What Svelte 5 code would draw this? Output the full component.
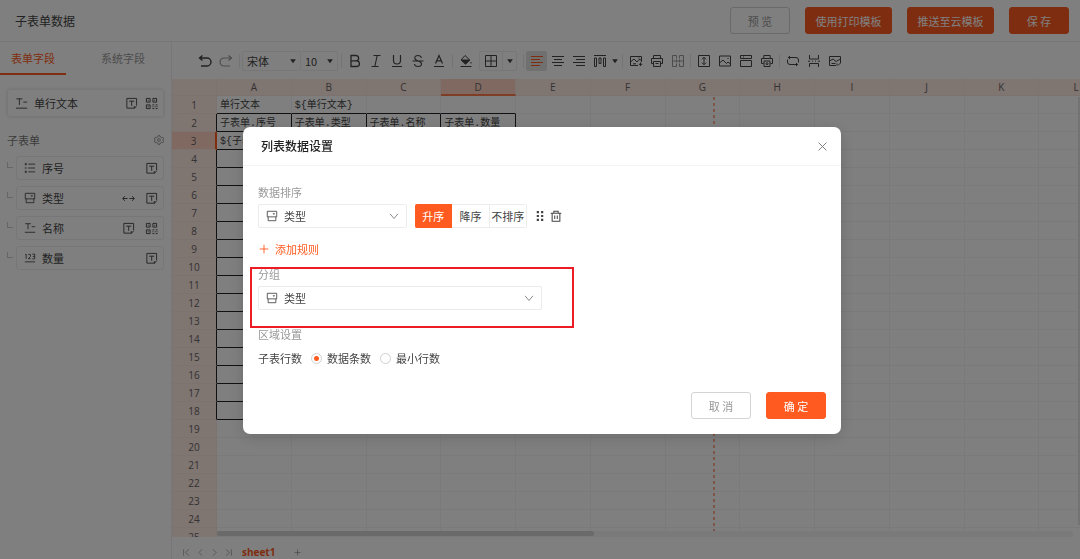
<script>
  // Inner markup of each line icon, drawn on a 14 x 14 grid.
  const icons = {
    undo: '<path d="M4.500 1.500 1.500 4l3 2.500M1.800 4H9a3.800 3.800 0 0 1 0 8H3" stroke-width="1.4"/>',
    redo: '<path d="M9.500 1.500 12.500 4l-3 2.500M12.200 4H5a3.800 3.800 0 0 0 0 8h6" stroke-width="1.2"/>',
    bold: '<path d="M3 1.500h5a2.600 2.600 0 0 1 0 5.300H3zM3 6.800h5.600a2.800 2.800 0 0 1 0 5.700H3z" stroke-width="1.3"/>',
    italic: '<path d="M4.500 1.500h7M2.500 12.500h7M8.200 1.500 5.800 12.500" stroke-width="1.1"/>',
    underline: '<path d="M3.500 1v5.500a3.500 3.500 0 0 0 7 0V1M2 12.500h10" stroke-width="1.2"/>',
    strike: '<path d="M10.500 3.800C10 2.300 8.800 1.500 7 1.500 5 1.500 3.800 2.500 3.800 4 3.800 5.500 5 6.300 7 7c2.300.6 3.500 1.500 3.500 3 0 1.600-1.400 2.500-3.500 2.500S3.600 11.500 3.400 10M1.500 7h11" stroke-width="1.1"/>',
    color: '<path d="M3.500 9.500 7 1.500l3.500 8M4.800 6.800h4.400M2 12.500h10" stroke-width="1.2"/>',
    fill: '<path d="M6 1.500 10.800 6 6.500 10 2 6z"/><path d="M2.300 6h8.200L6.500 10z" fill="currentColor"/><path d="M12 8v1.500M1.500 12.500h11"/>',
    borders: '<path d="M1.500 1.500h11v11h-11zM7 1.500v11M1.500 7h11"/>',
    left: '<path d="M1 2.500h12M1 5.500h9M1 8.500h12M1 11.500h9"/>',
    center: '<path d="M1 2.500h12M3 5.500h8M1 8.500h12M3 11.500h8"/>',
    right: '<path d="M1 2.500h12M4 5.500h9M1 8.500h12M4 11.500h9"/>',
    valign: '<path d="M1 1.500h12M1.500 4h2v8.500h-2zM6 4h2v5.500H6zM10.500 4h2v8.500h-2z"/>',
    imgcell: '<path d="M9 11.500H1.500v-9h11V8M1.500 8 5 5l3 3 2-2.500 2.500.5M11.500 8.500v3.500M9.800 10.300h3.500M4 9.800h3"/><path d="M9.500 4h1"/>',
    print: '<path d="M3.500 4.500v-3h7v3M3.500 9.500h-2v-5h11v5h-2M3.500 7.500h7v5h-7zM5.500 9.500h3"/>',
    merge: '<path d="M5.500 4.500v-3h-4v11h4v-3M8.500 4.500v-3h4v11h-4v-3M1.500 7h11M5.500 5.500v3M8.500 5.500v3"/>',
    height: '<path d="M1.500 1.500h11v11h-11zM7 3.500v7M5 5.300l2-2 2 2M5 8.700l2 2 2-2"/>',
    image: '<path d="M1.500 2h11v10h-11zM1.500 9 5 6l3.500 3.500L10 8l2.500 2M9.500 4.500h1"/>',
    window: '<path d="M1.500 1.500h11v3h-11zM1.500 6.500h11v6h-11zM4 3h1"/>',
    printset: '<path d="M3.800 4.500v-3h6.400v3M3.500 9.500h-2v-5h11v5h-2M4 7h6v5.500H4z"/><circle cx="7" cy="9.700" r="1"/>',
    loop: '<path d="M12.500 8.500V6a2.500 2.500 0 0 0-2.500-2.500H2.500M4 2 2.300 3.500 4 5M1.500 5.500V8A2.500 2.500 0 0 0 4 10.500h7.500M10 9l1.700 1.500L10 12"/>',
    split: '<path d="M2.500 1v4h9V1M2.500 13V9.500h9V13M1 7.200h2M5 7.200h1M8 7.200h1M11 7.200h2"/>',
    background: '<path d="M8 11.500H1.500v-9h11V9L10 11.500M1.500 7 5 5l3 2.500L12.500 5M3.500 9.500h4M9 9.500v2"/>',
    text: '<path d="M1.500 2h6.500M4.700 2v6.500M9 5.500h4M1 12h12"/>',
    tag: '<path d="M9.500 12H2V1.500h10.500v7.500M4.500 4.500H10M7.200 4.500v5M12.500 9.500 10 12.500V9.800"/>',
    qr: '<path d="M1.500 1.500h4v4h-4zM8.500 1.500h4v4h-4zM1.500 8.500h4v4h-4zM3 3.500h1M10 3.500h1M3 10.500h1M8 8.500h2M11.500 8.500h2M8 10.500h1M10.500 10.500h1M12.500 10.500h1M8 12.500h2M11.500 12.500h2"/>',
    list: '<path d="M5 2.500h8M5 7h8M5 11.500h8M.8 2.500h2.400M.8 7h2.400M.8 11.500h2.400M2.200 1v3M2.200 10v3"/>',
    type: '<path d="M1.500 1.500h11v6.500h-11zM2.500 8v4.500h9V8"/><path d="M8 4h2.400l-1.200 1.500z" fill="currentColor" stroke-width=".3"/>',
    number: '<path d="M1.500 3.500l1-1V8M5 2.800h2.500v2.500L5 7.800h2.700M9.700 2.500h2.800V8H9.700M10.200 5.200h2.200M1 11.500h12"/>',
    arrows: '<path d="M6 7H1M3 4.500.8 7 3 9.500M8 7h5M11 4.500 13.200 7 11 9.500"/>',
    gear: '<path d="M5.600 1h2.800l.5 1.800 1.600.9 1.800-.5L13.500 5.500 12.300 7l1.200 1.500-1.200 2.300-1.800-.5-1.600.9L8.400 13H5.600l-.5-1.800-1.600-.9-1.800.5L.5 8.500 1.700 7 .5 5.500l1.200-2.300 1.800.5 1.600-.9z"/><circle cx="7" cy="7" r="2"/>',
    caret: '<path d="M3 4.500h8L7 10z" fill="currentColor" stroke="none"/>',
    chevron: '<path d="M1.500 4 7 10.500 12.500 4" stroke-width="1.2"/>',
    close: '<path d="M2 2l10 10M12 2 2 12" stroke-width="1.2"/>',
    plus: '<path d="M7 1v12M1 7h12" stroke-width="1.3"/>',
    drag: '<path d="M3.200 1.200h2.600v2.600H3.200zM8.200 1.200h2.600v2.600H8.200zM3.200 5.700h2.600v2.600H3.200zM8.200 5.700h2.600v2.600H8.200zM3.200 10.200h2.600v2.600H3.200zM8.200 10.200h2.600v2.600H8.200z" fill="currentColor" stroke="none"/>',
    trash: '<path d="M.8 3.800h12.400M4.500 3.500v-2h5v2M2.500 4v9h9V4M5.500 6.500v4M8.500 6.500v4" stroke-width="1.2"/>',
    first: '<path d="M2.500 2v10M11 2 5.500 7l5.500 5"/>',
    prev: '<path d="M9.500 2 4.500 7l5 5"/>',
    next: '<path d="M4.500 2l5 5-5 5"/>',
    last: '<path d="M11.500 2v10M3 2l5.500 5L3 12"/>'
  };

  const children = [
    { name: '序号', icon: 'list', actions: ['tag'] },
    { name: '类型', icon: 'type', actions: ['arrows', 'tag'] },
    { name: '名称', icon: 'text', actions: ['tag', 'qr'] },
    { name: '数量', icon: 'number', actions: ['tag'] }
  ];
  const tools = [
    ['bold', '加粗'], ['italic', '斜体'], ['underline', '下划线'], ['strike', '删除线'], ['color', '文字颜色']
  ];
  const insertTools = [['imgcell', '单元格图片'], ['print', '打印'], ['merge', '合并单元格']];
  const pageTools = [['height', '行高'], ['image', '图片'], ['window', '页眉'], ['printset', '打印设置']];
  const endTools = [['loop', '循环'], ['split', '分页'], ['background', '背景']];
  const columns = 'ABCDEFGHIJKL'.split('');
  const rows = Array.from({ length: 25 }, (_, i) => i + 1);
  const cells = {
    A1: '单行文本', B1: '${单行文本}',
    A2: '子表单.序号', B2: '子表单.类型', C2: '子表单.名称', D2: '子表单.数量',
    A3: '${子表单.序号}'
  };
  const orders = ['升序', '降序', '不排序'];
  let order = $state('升序');
  let rowMode = $state('data');
</script>

{#snippet icon(name, size = 13)}
  <svg class="icon" width={size} height={size} viewBox="0 0 14 14" fill="none" stroke="currentColor" aria-hidden="true">{@html icons[name]}</svg>
{/snippet}

{#snippet tool(name, label)}
  <button class="tool {name}" aria-label={label}>{@render icon(name, 14)}</button>
{/snippet}

<div class="page">
  <header class="top">
    <h1>子表单数据</h1>
    <button class="btn">预 览</button>
    <button class="btn primary wide">使用打印模板</button>
    <button class="btn primary wide">推送至云模板</button>
    <button class="btn primary">保 存</button>
  </header>

  <div class="work">
    <aside>
      <nav class="tabs">
        <button class="tab active">表单字段</button>
        <button class="tab">系统字段</button>
      </nav>
      <div class="fields">
        <div class="field main-field">
          {@render icon('text')}
          <span class="name">单行文本</span>
          <span class="marks">{@render icon('tag')}{@render icon('qr')}</span>
        </div>
        <div class="group">
          <span>子表单</span>
          <button class="plain" aria-label="设置">{@render icon('gear', 10)}</button>
        </div>
        <ul>
          {#each children as child}
            <li>
              <i class="branch"></i>
              <div class="field">
                {@render icon(child.icon, 12)}
                <span class="name">{child.name}</span>
                <span class="marks">{#each child.actions as action}{@render icon(action)}{/each}</span>
              </div>
            </li>
          {/each}
        </ul>
      </div>
    </aside>

    <main>
      <div class="toolbar">
        {@render tool('undo', '撤销')}
        {@render tool('redo', '重做')}
        <i class="sep"></i>
        <div class="pick font">
          <select aria-label="字体"><option>宋体</option></select>
          {@render icon('caret', 10)}
        </div>
        <div class="pick size">
          <select aria-label="字号"><option>10</option></select>
          {@render icon('caret', 10)}
        </div>
        <i class="sep"></i>
        {#each tools as [name, label]}{@render tool(name, label)}{/each}
        <i class="sep"></i>
        {@render tool('fill', '填充')}
        <div class="border-pick">
          <button aria-label="边框">{@render icon('borders', 14)}</button>
          <button aria-label="边框选项">{@render icon('caret', 10)}</button>
        </div>
        <i class="sep"></i>
        {@render tool('left', '左对齐')}
        {@render tool('center', '居中')}
        {@render tool('right', '右对齐')}
        {@render tool('valign', '垂直对齐')}
        <button class="drop" aria-label="垂直对齐选项">{@render icon('caret', 10)}</button>
        <i class="sep"></i>
        {#each insertTools as [name, label]}{@render tool(name, label)}{/each}
        <i class="sep tight"></i>
        {#each pageTools as [name, label]}{@render tool(name, label)}{/each}
        <i class="sep tight"></i>
        {#each endTools as [name, label]}{@render tool(name, label)}{/each}
      </div>

      <div class="sheet">
        <table>
          <thead>
            <tr>
              <th class="corner"></th>
              {#each columns as col}<th class:current={col === 'D'}>{col}</th>{/each}
            </tr>
          </thead>
          <tbody>
            {#each rows as row}
              <tr>
                <th class:current={row === 3} class:edge={row > 1 && row < 19}>{row}</th>
                {#each columns as col, c}
                  <td class:boxed={row > 1 && row < 19 && c < 4} class:lead={row === 1 && c < 4}>
                    <div>{cells[col + row] ?? ''}</div>
                  </td>
                {/each}
              </tr>
            {/each}
          </tbody>
        </table>
        <i class="page-line"></i>
        <div class="hscroll"><i></i></div>
        <i class="vscroll"></i>
      </div>

      <footer class="sheets">
        <button class="plain" aria-label="首页">{@render icon('first', 9)}</button>
        <button class="plain" aria-label="上一页">{@render icon('prev', 9)}</button>
        <button class="plain" aria-label="下一页">{@render icon('next', 9)}</button>
        <button class="plain" aria-label="末页">{@render icon('last', 9)}</button>
        <button class="plain sheet-name">sheet1</button>
        <button class="plain" aria-label="新建">{@render icon('plus', 7)}</button>
      </footer>
    </main>
  </div>
</div>

<div class="mask">
  <div class="modal" role="dialog" aria-labelledby="dialog-title">
    <div class="modal-head">
      <h2 id="dialog-title">列表数据设置</h2>
      <button class="plain" aria-label="关闭">{@render icon('close', 11)}</button>
    </div>
    <div class="modal-body">
      <label class="caption" for="sort-field">数据排序</label>
      <div class="rule">
        <div class="combo sort">
          {@render icon('type', 12)}
          <select id="sort-field"><option>类型</option></select>
          {@render icon('chevron', 10)}
        </div>
        <div class="segments">
          {#each orders as item}
            <button class:on={order === item} onclick={() => (order = item)}>{item}</button>
          {/each}
        </div>
        <button class="plain" aria-label="拖动">{@render icon('drag', 12)}</button>
        <button class="plain" aria-label="删除">{@render icon('trash', 12)}</button>
      </div>
      <button class="plain add">{@render icon('plus', 10)}<span>添加规则</span></button>
      <div class="grouping">
        <label class="caption" for="group-field">分组</label>
        <div class="combo">
          {@render icon('type', 12)}
          <select id="group-field"><option>类型</option></select>
          {@render icon('chevron', 10)}
        </div>
        <i class="highlight"></i>
      </div>
      <div class="caption">区域设置</div>
      <div class="radios">
        <span>子表行数</span>
        <label><input type="radio" name="rows" value="data" bind:group={rowMode} />数据条数</label>
        <label><input type="radio" name="rows" value="min" bind:group={rowMode} />最小行数</label>
      </div>
      <div class="actions">
        <button class="btn">取 消</button>
        <button class="btn primary">确 定</button>
      </div>
    </div>
  </div>
</div>

<style>
  :global(body) { overflow: hidden; }
  .page, .mask {
    font: 11px/16px "Noto Sans CJK SC", sans-serif;
    color: #444;
  }
  .page, .page *, .mask, .mask * { box-sizing: border-box; }
  button, select { font: inherit; color: inherit; margin: 0; padding: 0; }
  button { cursor: pointer; white-space: nowrap; }
  .icon { display: block; flex: none; }
  i { display: block; flex: none; }
  .plain { border: 0; background: none; display: flex; align-items: center; }

  .page { height: 100vh; display: flex; flex-direction: column; background: #fff; }
  .top {
    display: flex; align-items: center; gap: 15px;
    height: 42px; padding: 0 11px 0 15px; border-bottom: 1px solid #eee;
  }
  h1, h2 { margin: 0; font-size: 12px; font-weight: 400; }
  h1 { margin-right: auto; }
  h2 { font-weight: 500; color: #222; }
  .btn {
    min-width: 60px; height: 27px; border: 1px solid #d4d4d4; border-radius: 3px;
    background: #fff; color: #999;
  }
  .btn.primary { border-color: #ff5b20; background: #ff5b20; color: #fff; }
  .wide { min-width: 87px; }

  .work { flex: 1; min-height: 0; display: flex; }
  aside { width: 172px; flex: none; border-right: 1px solid #eee; }
  .tabs { display: flex; gap: 24px; }
  .tab {
    width: 66px; height: 33px; border: 0; border-bottom: 2px solid transparent;
    background: none; color: #999;
  }
  .tab.active { color: #ff5b20; border-color: #ff5b20; }
  .fields { padding: 14px 7px; }
  .field {
    flex: 1; display: flex; align-items: center; gap: 6px;
    height: 24px; padding: 0 5px 0 7px; border: 1px solid #eee; border-radius: 3px;
  }
  .name { flex: 1; }
  .marks { display: flex; gap: 10px; }
  .main-field { height: 28px; box-shadow: 0 0 3px #ddd; }
  .main-field .marks { gap: 7px; }
  .group {
    display: flex; justify-content: space-between; align-items: center;
    padding: 15px 0 8px; color: #777;
  }
  ul { list-style: none; margin: 0; padding: 0; display: grid; gap: 6px; }
  li { display: flex; gap: 3px; }
  .branch {
    width: 6px; height: 6px; margin-top: 6px;
    border: solid #ccc; border-width: 0 0 1px 1px;
  }

  main { flex: 1; min-width: 0; display: flex; flex-direction: column; }
  .toolbar { display: flex; align-items: center; height: 37px; padding-left: 22px; }
  .tool {
    width: 21px; height: 20px; border: 0; background: none;
    display: grid; place-items: center; flex: none;
  }
  .tool.redo, .tool.merge { color: #999; }
  .tool.left { background: #e0e0e0; color: #ff5b20; border-radius: 2px; }
  .sep { width: 6px; height: 14px; background: linear-gradient(#e9e9e9, #e9e9e9) center / 1px 100% no-repeat; }
  .tight { width: 5px; }
  .pick {
    display: flex; align-items: center; height: 20px; padding: 0 2px 0 4px;
    border: 1px solid #eee; border-radius: 2px;
  }
  .pick select { flex: 1; min-width: 0; border: 0; background: none; appearance: none; }
  .font { width: 59px; }
  .size { width: 37px; border-left: 0; }
  .border-pick { display: flex; height: 20px; margin: 0 3px; border: 1px solid #eee; border-radius: 2px; }
  .border-pick button { border: 0; background: none; display: grid; place-items: center; width: 22px; }
  .border-pick button + button { width: 14px; border-left: 1px solid #eee; }
  .drop { width: 9px; border: 0; background: none; display: grid; place-items: center; }

  .sheet { flex: 1; min-height: 0; position: relative; overflow: hidden; }
  table { width: calc(100% + 34px); table-layout: fixed; border-spacing: 0; }
  th, td { height: 18px; padding: 0; border: solid #f5f5f5; border-width: 0 1px 1px 0; }
  th {
    background: #ffeae3; border-color: #f8e4de; color: #666;
    font: 400 10px/14px "Open Sans", sans-serif;
  }
  thead th { height: 17px; }
  .corner { width: 45px; }
  th.current { background: #ffd3c2; }
  thead .current { border-bottom: 2px solid #ff7a4d; }
  tbody .edge { border-right-color: #222; }
  tbody .current { border-right: 2px solid #ff5b20; }
  .boxed { border-color: #222; }
  .lead { border-bottom-color: #222; }
  td div {
    height: 17px; overflow: hidden; padding: 2px 2px 0 3px;
    font: 10px/15px "Liberation Mono", "Noto Sans CJK SC", monospace;
    word-break: break-all;
  }
  .page-line {
    position: absolute; left: 59.6%; top: 18px; bottom: 6px; width: 2px;
    background: repeating-linear-gradient(#ffab90 0 3px, transparent 3px 6px);
  }
  .hscroll { position: absolute; left: 45px; right: 7px; bottom: 0; height: 6px; background: #f4f4f4; }
  .hscroll i { width: 44%; height: 5px; border-radius: 3px; background: #d4d4d4; }
  .vscroll { position: absolute; right: 0; top: 18px; bottom: 12px; width: 2px; background: #e6e6e6; }

  .sheets { display: flex; align-items: center; gap: 5px; height: 22px; padding: 8px 0 0 10px; color: #888; }
  .sheets .sheet-name {
    margin: 0 14px 0 4px; color: #ff5b20;
    font: 700 10px/14px "Open Sans", sans-serif;
  }

  .mask {
    position: fixed; inset: 0; display: flex; align-items: center; justify-content: center;
    padding: 2px 0 0 4px; background: rgba(0, 0, 0, 0.5);
  }
  .modal {
    width: 598px; max-width: 96%; background: #fff; border-radius: 7px;
    box-shadow: 0 3px 16px rgba(0, 0, 0, 0.15);
  }
  .modal-head {
    display: flex; align-items: center; justify-content: space-between;
    height: 39px; padding: 0 13px 0 18px; border-bottom: 1px solid #f4f4f4; color: #777;
  }
  .modal-body { padding: 18px 15px 15px; }
  .caption { display: block; color: #999; }
  .rule { display: flex; align-items: center; gap: 5px; margin-top: 4px; }
  .combo {
    display: flex; align-items: center; gap: 6px; height: 24px; padding: 0 7px;
    border: 1px solid #ececec; border-radius: 2px;
  }
  .combo select { flex: 1; min-width: 0; border: 0; background: none; appearance: none; }
  .combo .icon:last-child { color: #777; }
  .sort { width: 149px; margin-right: 3px; }
  .segments { display: flex; width: 112px; margin-right: 2px; }
  .segments button {
    flex: 1; height: 24px; border: solid #ececec; border-width: 1px 1px 1px 0; background: #fff;
  }
  .segments button:first-child { border-radius: 2px 0 0 2px; }
  .segments button:last-child { border-radius: 0 2px 2px 0; }
  .segments .on { background: #ff5b20; border-color: #ff5b20; color: #fff; }
  .rule .plain { margin-right: -1px; }
  .add { gap: 6px; margin-top: 13px; padding-left: 1px; color: #ff5b20; }
  .grouping { position: relative; width: 50%; margin: 9px 0 16px; }
  .grouping .combo { margin-top: 4px; }
  .highlight { position: absolute; inset: 1px -32px -18px -8px; border: 2px solid #ed1c24; }
  .radios { display: flex; align-items: center; gap: 9px; margin-top: 8px; }
  .radios label { display: flex; align-items: center; gap: 5px; }
  input {
    appearance: none; width: 11px; height: 11px; margin: 0;
    border: 1px solid #d0d0d0; border-radius: 50%; background: #fff;
  }
  input:checked { background: radial-gradient(circle, #ff5b20 0 2px, #fff 3px); }
  .actions { display: flex; justify-content: flex-end; gap: 15px; margin-top: 26px; }
</style>
